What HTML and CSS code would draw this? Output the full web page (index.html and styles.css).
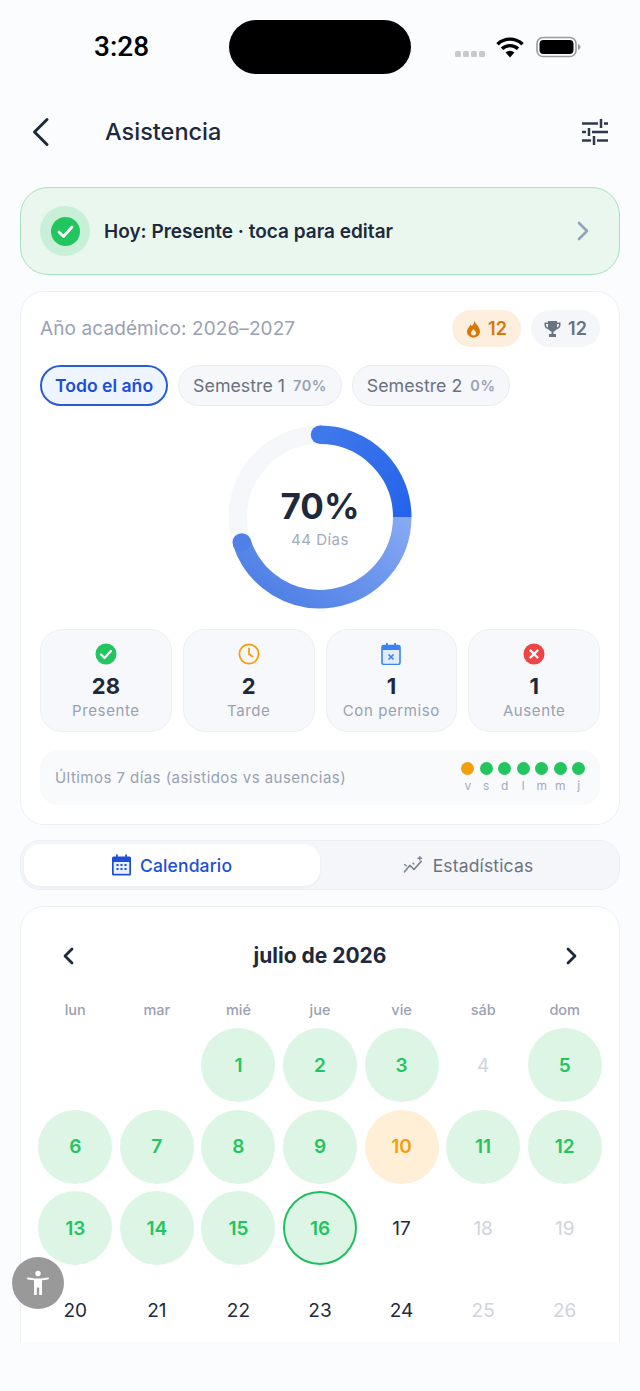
FILE: index.html
```html
<!DOCTYPE html>
<html lang="es">
<head>
  <meta charset="UTF-8" />
  <meta name="viewport" content="width=device-width, initial-scale=1.0" />
  <title>Asistencia</title>
  <link rel="stylesheet" href="styles.css">
</head>
<body>
  <div class="status">
    <span class="time">3:28</span>
    <div class="island"></div>
    <div class="status-icons">
      <div class="signal"><i></i><i></i><i></i><i></i></div>
      <svg class="wifi" width="28" height="22" viewBox="0 0 28 22"><path d="M1.500 8.200a18 18 0 0 1 25 0" fill="none" stroke="#000" stroke-width="3.400"/><path d="M6 12.800a11.600 11.600 0 0 1 16 0" fill="none" stroke="#000" stroke-width="3.400"/><path d="M9.600 16.600a6 6 0 0 1 8.800 0L14 21.600z" fill="#000"/></svg>
      <svg class="battery" width="45" height="22" viewBox="0 0 45 22"><rect x="1" y="1.500" width="39" height="19" rx="6" fill="none" stroke="#9a9a9a" stroke-width="1.600"/><rect x="3.500" y="4" width="34" height="14" rx="4" fill="#000"/><path d="M42 8v6c1.500-.5 2.400-1.600 2.400-3S43.500 8.500 42 8z" fill="#9a9a9a"/></svg>
    </div>
  </div>

  <header class="topbar">
    <svg class="back" width="20" height="30" viewBox="0 0 20 30"><path d="M16 2.500 3.500 15 16 27.500" fill="none" stroke="#1e293b" stroke-width="3" stroke-linecap="round" stroke-linejoin="round"/></svg>
    <h1>Asistencia</h1>
    <svg class="filter" width="28" height="28" viewBox="0 0 28 28" fill="none" stroke="#2f3a4c" stroke-width="2.500"><path d="M1 5.500h16M23 5.500h4M20 1v9M1 14h4M11 14h16M8 10v8M1 22.500h9M16 22.500h11M13 18v9"/></svg>
  </header>

  <main class="scroll">
    <div class="today">
      <div class="today-halo">
        <svg width="29" height="29" viewBox="0 0 29 29"><circle cx="14.500" cy="14.500" r="14.500" fill="#22c55e"/><path d="M8 15l4.500 4.500L21 10" fill="none" stroke="#fff" stroke-width="2.800" stroke-linecap="round" stroke-linejoin="round"/></svg>
      </div>
      <span class="today-text">Hoy: Presente · toca para editar</span>
      <svg width="12" height="20" viewBox="0 0 12 20"><path d="M2 2l8 8-8 8" fill="none" stroke="#94a3b8" stroke-width="2.600" stroke-linecap="round" stroke-linejoin="round"/></svg>
    </div>

    <section class="card summary">
      <div class="summary-head">
        <span class="year">Año académico: 2026–2027</span>
        <div class="badges">
          <span class="badge badge-fire">
            <svg width="15" height="18" viewBox="0 0 15 18"><path d="M8 .5c.6 3-1 4.300-2.300 5.800-.4-.8-.7-1.300-1.400-1.800C3.900 6.800 1 8.300 1 11.500 1 15 3.900 17.500 7.500 17.500S14 15 14 11.500C14 7 9.800 4.500 8 .5zM7.500 15.500c-1.500 0-2.600-1-2.600-2.400 0-1.700 1.700-2.400 2.600-4.100.9 1.700 2.600 2.400 2.600 4.100 0 1.400-1.100 2.400-2.600 2.400z" fill="#d97706"/></svg>
            12
          </span>
          <span class="badge badge-trophy">
            <svg width="17" height="18" viewBox="0 0 17 18"><path d="M4 1h9v1.500h3.500V5c0 2.300-1.500 3.900-3.900 4.200-.7 1.200-1.800 2-3.100 2.200V14H12v3H5v-3h2.500v-2.600c-1.300-.2-2.400-1-3.100-2.200C2 8.900.5 7.300.5 5V2.500H4zM2 4v1c0 1.200.7 2.100 2 2.500V4zm13 0h-2v3.500c1.300-.4 2-1.300 2-2.500z" fill="#6b7280"/></svg>
            12
          </span>
        </div>
      </div>

      <div class="pills">
        <span class="pill pill-active">Todo el año</span>
        <span class="pill">Semestre 1 <b>70%</b></span>
        <span class="pill">Semestre 2 <b>0%</b></span>
      </div>

      <div class="ring">
        <svg width="184" height="184" viewBox="0 0 184 184">
          <defs>
            <linearGradient id="arcTop" x1="0" y1="0" x2="1" y2="1"><stop offset="0" stop-color="#3f78ea"/><stop offset="1" stop-color="#2563eb"/></linearGradient>
            <linearGradient id="arcBottom" x1="1" y1="0" x2="0" y2="0.700"><stop offset="0" stop-color="#86a9f2"/><stop offset="1" stop-color="#4f80e6"/></linearGradient>
          </defs>
          <circle cx="92" cy="92" r="82.250" fill="none" stroke="#f5f7fa" stroke-width="18.500"/>
          <path d="M92 9.750A82.250 82.250 0 0 1 174.250 92" fill="none" stroke="url(#arcTop)" stroke-width="18.500"/>
          <path d="M174.250 92A82.250 82.250 0 0 1 13.800 117.400" fill="none" stroke="url(#arcBottom)" stroke-width="18.500"/>
          <circle cx="92" cy="9.750" r="9.250" fill="#3f78ea"/>
          <circle cx="13.800" cy="117.400" r="9.250" fill="#4f80e6"/>
        </svg>
        <div class="ring-label">
          <strong>70%</strong>
          <span>44 Días</span>
        </div>
      </div>

      <div class="stats">
        <div class="stat">
          <svg width="22" height="22" viewBox="0 0 22 22"><circle cx="11" cy="11" r="10.500" fill="#22c55e"/><path d="M6 11.500l3.500 3.500L16 8" fill="none" stroke="#fff" stroke-width="2.200" stroke-linecap="round" stroke-linejoin="round"/></svg>
          <b>28</b><span>Presente</span>
        </div>
        <div class="stat">
          <svg width="22" height="22" viewBox="0 0 22 22" fill="none" stroke="#f59e0b" stroke-width="1.800"><circle cx="11" cy="11" r="9.600"/><path d="M11 5.500V11l3.500 2.500" stroke-linecap="round" stroke-linejoin="round"/></svg>
          <b>2</b><span>Tarde</span>
        </div>
        <div class="stat">
          <svg width="22" height="22" viewBox="0 0 22 22"><rect x="2" y="2.500" width="18" height="19" rx="2" fill="#e3ecfd" stroke="#3b82f6" stroke-width="1.600"/><path d="M2 3.500a1.500 1.500 0 0 1 1.500-1.500H6V0h1.800v2h6.400V0H16v2h2.500A1.500 1.500 0 0 1 20 3.500V7H2z" fill="#3b82f6"/><path d="M8.500 11.500l5 5M13.500 11.500l-5 5" stroke="#3b82f6" stroke-width="1.700"/></svg>
          <b>1</b><span>Con permiso</span>
        </div>
        <div class="stat">
          <svg width="22" height="22" viewBox="0 0 22 22"><circle cx="11" cy="11" r="10.500" fill="#ef4444"/><path d="M7.500 7.500l7 7M14.500 7.500l-7 7" stroke="#fff" stroke-width="2.400" stroke-linecap="round"/></svg>
          <b>1</b><span>Ausente</span>
        </div>
      </div>

      <div class="week">
        <span class="week-title">Últimos 7 días (asistidos vs ausencias)</span>
        <div class="week-days">
          <div class="week-day"><i class="late"></i><span>v</span></div>
          <div class="week-day"><i></i><span>s</span></div>
          <div class="week-day"><i></i><span>d</span></div>
          <div class="week-day"><i></i><span>l</span></div>
          <div class="week-day"><i></i><span>m</span></div>
          <div class="week-day"><i></i><span>m</span></div>
          <div class="week-day"><i></i><span>j</span></div>
        </div>
      </div>
    </section>

    <div class="tabs">
      <div class="tab tab-active">
        <svg width="19" height="22" viewBox="0 0 19 22"><path d="M1.500 2.500H4V.5h1.800v2h7.400v-2H15v2h2.500A1.500 1.500 0 0 1 19 4v16a1.500 1.500 0 0 1-1.500 1.500h-16A1.500 1.500 0 0 1 0 20V4a1.500 1.500 0 0 1 1.500-1.500z" fill="#1d4ed8"/><rect x="1.700" y="8" width="15.600" height="11.800" fill="#e8effd"/><path d="M4.500 11h2M8.500 11h2M12.500 11h2M4.500 15h2M8.500 15h2M12.500 15h2" stroke="#1d4ed8" stroke-width="1.800"/></svg>
        Calendario
      </div>
      <div class="tab">
        <svg width="21" height="18" viewBox="0 0 23 20" fill="none" stroke="#7b8494" stroke-width="1.900" stroke-linejoin="round" stroke-linecap="round"><path d="M1.500 17.500l6-7 4.500 4.500 8-9"/><path d="M1.500 9.500l2 1.500M11 8l1 1M18.500.5v4M16.500 2.500h4" stroke-width="1.500"/></svg>
        Estadísticas
      </div>
    </div>

    <section class="card calendar">
      <div class="cal-head">
        <svg width="12" height="18" viewBox="0 0 12 18"><path d="M10 2L3 9l7 7" fill="none" stroke="#1e293b" stroke-width="2.800" stroke-linecap="round" stroke-linejoin="round"/></svg>
        <h2>julio de 2026</h2>
        <svg width="12" height="18" viewBox="0 0 12 18"><path d="M2 2l7 7-7 7" fill="none" stroke="#1e293b" stroke-width="2.800" stroke-linecap="round" stroke-linejoin="round"/></svg>
      </div>
      <div class="cal-grid cal-weekdays">
        <span>lun</span><span>mar</span><span>mié</span><span>jue</span><span>vie</span><span>sáb</span><span>dom</span>
      </div>
      <div class="cal-grid">
        <span class="day day-empty"></span>
        <span class="day day-empty"></span>
        <span class="day present">1</span>
        <span class="day present">2</span>
        <span class="day present">3</span>
        <span class="day off">4</span>
        <span class="day present">5</span>
        <span class="day present">6</span>
        <span class="day present">7</span>
        <span class="day present">8</span>
        <span class="day present">9</span>
        <span class="day late">10</span>
        <span class="day present">11</span>
        <span class="day present">12</span>
        <span class="day present">13</span>
        <span class="day present">14</span>
        <span class="day present">15</span>
        <span class="day present today-cell">16</span>
        <span class="day">17</span>
        <span class="day off">18</span>
        <span class="day off">19</span>
        <span class="day">20</span>
        <span class="day">21</span>
        <span class="day">22</span>
        <span class="day">23</span>
        <span class="day">24</span>
        <span class="day off">25</span>
        <span class="day off">26</span>
      </div>
    </section>
  </main>

  <button class="a11y" aria-label="Accesibilidad">
    <svg width="22" height="26" viewBox="0 0 22 26" fill="#fff"><circle cx="11" cy="3.500" r="2.700"/><path d="M.8 7.600c-.5.100-.8.500-.8 1s.5.900 1 .8l6 .9V25h2.800v-7.500h2.400V25H15V10.300l6-.9c.5-.1 1-.3 1-.8s-.3-.9-.8-1c-3.200.5-6.700 1-10.200 1S4 8.100.8 7.600z"/></svg>
  </button>
</body>
</html>
```

FILE: styles.css
```css
* { box-sizing: border-box; }
html, body { margin: 0; padding: 0; }
body { width: 640px; height: 1391px; overflow: hidden; position: relative; background: #fbfcfe; color: #1e293b; font-family: Inter, "Liberation Sans", sans-serif; }
svg { display: block; flex-shrink: 0; }

.status { height: 90px; padding: 20px 59px 0 94px; display: flex; align-items: flex-start; }
.time { width: 135px; height: 54px; line-height: 54px; font-family: Roboto, sans-serif; font-size: 28px; font-weight: 500; color: #000; }
.island { width: 182px; height: 54px; border-radius: 27px; background: #000; }
.status-icons { display: flex; align-items: center; height: 54px; margin-left: 44px; }
.signal { display: flex; gap: 2px; margin: 14px 11px 0 0; }
.signal i { width: 6px; height: 6px; border-radius: 1.500px; background: #c9c9c9; }
.wifi { margin-right: 12px; }

.topbar { height: 84px; padding: 0 31px; display: flex; align-items: center; }
.topbar h1 { margin: 0 0 0 54px; flex: 1; font-size: 23.500px; font-weight: 500; line-height: 30px; }

.scroll { height: 1168px; padding: 13px 20px 0; overflow: hidden; }

.today { height: 88px; padding: 0 30px 0 19px; display: flex; align-items: center; background: #e9f7ef; border: 1px solid #a6e2bf; border-radius: 28px; }
.today-halo { width: 50px; height: 50px; border-radius: 50%; background: #c8efd7; display: flex; align-items: center; justify-content: center; }
.today-text { flex: 1; margin-left: 14px; font-size: 19px; font-weight: 600; }

.card { background: #fff; border: 1px solid #eef0f5; border-radius: 24px; }
.summary { margin-top: 16px; height: 534px; padding: 18px 19px 0; }
.summary-head { display: flex; align-items: center; justify-content: space-between; height: 37px; }
.year { font-size: 19px; letter-spacing: .1px; color: #99a1b3; }
.badges { display: flex; gap: 10px; }
.badge { width: 69px; height: 37px; border-radius: 19px; display: flex; align-items: center; justify-content: center; gap: 7px; font-size: 18px; font-weight: 600; }
.badge-fire { background: #fdeedd; color: #d97706; }
.badge-trophy { background: #f4f6fa; color: #6b7280; }

.pills { display: flex; gap: 10px; margin-top: 18px; }
.pill { height: 41px; padding: 0 14px; display: flex; align-items: center; gap: 8px; border: 1px solid #e9ecf2; border-radius: 21px; background: #f5f7fb; font-size: 17.800px; color: #6b7280; }
.pill b { font-size: 14.500px; font-weight: 600; color: #99a1b3; letter-spacing: .5px; }
.pill-active { padding: 0 13px; background: #eff5fe; border: 2px solid #2a5bd7; color: #1d4ed8; font-size: 17.600px; font-weight: 600; }

.ring { position: relative; width: 184px; height: 184px; margin: 19px auto 0; }
.ring-label { position: absolute; inset: 0; display: flex; flex-direction: column; align-items: center; justify-content: center; }
.ring-label strong { font-size: 35px; font-weight: 700; line-height: 40px; margin-top: 2px; }
.ring-label span { font-size: 15px; color: #a3abbb; letter-spacing: .5px; line-height: 20px; margin-top: 4px; }

.stats { display: grid; grid-template-columns: repeat(4, 1fr); gap: 11px; margin-top: 20px; }
.stat { height: 103px; padding-top: 13px; display: flex; flex-direction: column; align-items: center; background: #f6f8fc; border: 1px solid #eceff4; border-radius: 22px; }
.stat b { font-size: 22px; font-weight: 700; line-height: 28px; margin-top: 7px; }
.stat span { font-size: 15px; color: #99a1b3; letter-spacing: .6px; line-height: 20px; margin-top: 1px; }

.week { height: 55px; margin-top: 18px; padding: 0 12px 0 15px; display: flex; align-items: center; justify-content: space-between; background: #f8fafc; border-radius: 18px; }
.week-title { font-size: 15px; color: #99a1b3; letter-spacing: .45px; }
.week-days { display: flex; }
.week-day { width: 18.500px; display: flex; flex-direction: column; align-items: center; gap: 4px; }
.week-day i { width: 13px; height: 13px; border-radius: 50%; background: #22c55e; }
.week-day i.late { background: #f59e0b; }
.week-day span { font-size: 12px; line-height: 14px; color: #a3abbb; }

.tabs { margin-top: 15px; height: 50px; padding: 3px; display: flex; background: #f4f6fa; border: 1px solid #eceff4; border-radius: 20px; }
.tab { flex: 1; display: flex; align-items: center; justify-content: center; gap: 9px; font-size: 17.500px; letter-spacing: .15px; color: #6b7280; border-radius: 16px; }
.tab-active { background: #fff; color: #1d4ed8; font-weight: 500; box-shadow: 0 1px 3px rgba(30, 41, 59, .06); }

.calendar { margin-top: 16px; height: 520px; padding: 0 13.500px; }
.cal-head { height: 97px; padding: 0 27.500px; display: flex; align-items: center; justify-content: space-between; }
.cal-head h2 { margin: 0; font-size: 21px; font-weight: 700; }
.cal-grid { display: grid; grid-template-columns: repeat(7, 1fr); justify-items: center; row-gap: 7.700px; }
.cal-weekdays { height: 24px; margin-bottom: 7px; margin-top: -7px; font-size: 14.500px; font-weight: 500; color: #99a1b3; align-items: center; }
.day { width: 74px; height: 74px; border-radius: 50%; display: flex; align-items: center; justify-content: center; font-size: 19px; color: #1e293b; }
.day.present { background: #dcf5e5; color: #22c55e; font-weight: 600; }
.day.late { background: #feefd6; color: #f59e0b; font-weight: 600; }
.day.off { color: #cfd4dc; }
.day.today-cell { border: 2.500px solid #1fbf5f; }

.a11y { position: absolute; left: 12px; top: 1257px; width: 52px; height: 52px; padding: 0; border: none; border-radius: 50%; background: #999; display: flex; align-items: center; justify-content: center; }
```
